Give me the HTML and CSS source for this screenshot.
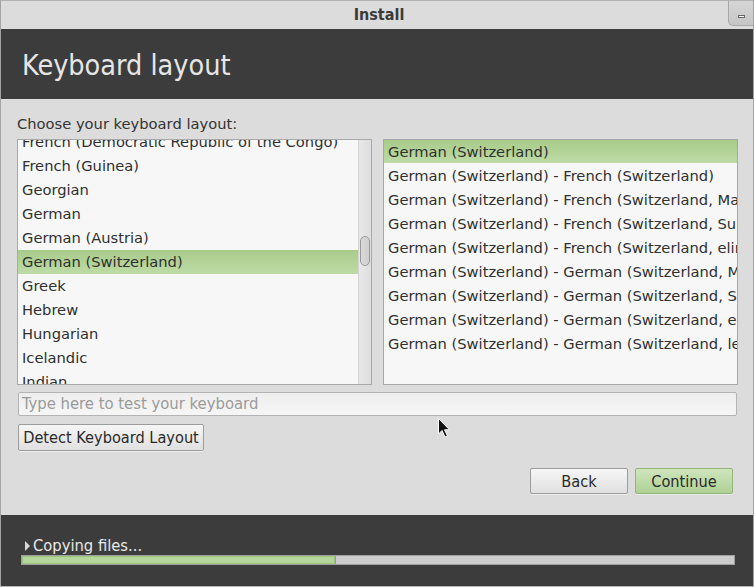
FILE: index.html
```html
<!DOCTYPE html>
<html>
<head>
<meta charset="utf-8">
<link rel="stylesheet" href="styles.css">
</head>
<body>
<div class="window">
  <div class="titlebar">
    <span class="title">Install</span>
    <div class="min-btn"><span class="dash"></span></div>
  </div>
  <div class="header">Keyboard layout</div>
  <div class="content">
    <div class="label">Choose your keyboard layout:</div>
    <div class="lists">
      <div class="listbox">
        <div class="rows scrolled">
          <div class="row">French (Democratic Republic of the Congo)</div>
          <div class="row">French (Guinea)</div>
          <div class="row">Georgian</div>
          <div class="row">German</div>
          <div class="row">German (Austria)</div>
          <div class="row sel">German (Switzerland)</div>
          <div class="row">Greek</div>
          <div class="row">Hebrew</div>
          <div class="row">Hungarian</div>
          <div class="row">Icelandic</div>
          <div class="row">Indian</div>
        </div>
        <div class="scrollbar"><div class="thumb"></div></div>
      </div>
      <div class="listbox">
        <div class="rows variants">
          <div class="row sel first">German (Switzerland)</div>
          <div class="row">German (Switzerland) - French (Switzerland)</div>
          <div class="row">German (Switzerland) - French (Switzerland, Macintosh)</div>
          <div class="row">German (Switzerland) - French (Switzerland, Sun dead keys)</div>
          <div class="row">German (Switzerland) - French (Switzerland, eliminate dead keys)</div>
          <div class="row">German (Switzerland) - German (Switzerland, Macintosh)</div>
          <div class="row">German (Switzerland) - German (Switzerland, Sun dead keys)</div>
          <div class="row">German (Switzerland) - German (Switzerland, eliminate dead keys)</div>
          <div class="row">German (Switzerland) - German (Switzerland, legacy)</div>
        </div>
      </div>
    </div>
    <div class="testfield">Type here to test your keyboard</div>
    <div class="detect-row"><button class="btn detect">Detect Keyboard Layout</button></div>
    <div class="nav">
      <button class="btn">Back</button>
      <button class="btn primary">Continue</button>
    </div>
  </div>
  <div class="footer">
    <div class="status"><span class="tri"></span>Copying files...</div>
    <div class="progress"><div class="fill" style="width:314px"></div></div>
  </div>
  <svg class="cursor" width="14" height="22" viewBox="0 0 14 22">
    <path d="M1.5 1.5 L1.5 17 L5 13.5 L8 20 L10.5 19 L7.5 12.8 L12.5 12.8 Z" fill="#111" stroke="#fff" stroke-width="1"/>
  </svg>
</div>
</body>
</html>
```
FILE: styles.css
```css
* { box-sizing: border-box; }
html, body { margin: 0; padding: 0; }
body {
  width: 754px;
  height: 587px;
  overflow: hidden;
  background: #dcdcdc;
  font-family: "DejaVu Sans", "Liberation Sans", sans-serif;
  color: #2e2e2e;
}
.window {
  position: relative;
  width: 754px;
  height: 587px;
  border-left: 1px solid #a4a4a4;
  border-right: 1px solid #a4a4a4;
  border-bottom: 1px solid #b8b8b8;
  display: flex;
  flex-direction: column;
  background: #dcdcdc;
}
.titlebar {
  position: relative;
  height: 29px;
  display: flex;
  align-items: center;
  justify-content: center;
  background: #dcdcdc;
  border-top: 1px solid #b0b0b0;
  padding-bottom: 2px;
}
.title {
  font-family: "DejaVu Sans Condensed", "DejaVu Sans", sans-serif;
  font-stretch: condensed;
  font-weight: bold;
  font-size: 16px;
  color: #3a3a3a;
  margin-left: 4px;
}
.min-btn {
  position: absolute;
  right: 0;
  top: 0;
  width: 25px;
  height: 25px;
  background: linear-gradient(#d6d6d6, #c6c6c6);
  border-left: 1px solid #a8a8a8;
  border-bottom: 1px solid #a8a8a8;
  border-bottom-left-radius: 5px;
  display: flex;
  align-items: center;
  justify-content: center;
}
.dash {
  display: block;
  width: 7px;
  height: 3px;
  background: #fff;
  border: 1px solid #666;
  margin-top: 6px;
}
.header {
  height: 70px;
  background: #3c3c3c;
  color: #e6e6e6;
  font-family: "DejaVu Sans Condensed", "DejaVu Sans", sans-serif;
  font-stretch: condensed;
  font-size: 28.5px;
  padding-left: 21px;
  padding-top: 2px;
  display: flex;
  align-items: center;
}
.content {
  height: 416px;
  padding: 16px 15px 0 16px;
  display: flex;
  flex-direction: column;
}
.label {
  font-size: 14.7px;
  line-height: 17px;
  color: #333;
  margin-bottom: 7px;
}
.lists {
  display: grid;
  grid-template-columns: 355px 355px;
  column-gap: 11px;
}
.listbox {
  position: relative;
  height: 246px;
  border: 1px solid #a8a8a8;
  background: #f7f7f7;
  overflow: hidden;
  display: flex;
}
.rows {
  flex: 1;
  min-width: 0;
}
.scrolled { margin-top: -10px; }
.row {
  height: 24px;
  line-height: 24px;
  padding-left: 4px;
  font-size: 14.7px;
  color: #303030;
  white-space: nowrap;
  overflow: hidden;
}
.variants .row { line-height: 25px; }
.variants .row.first { height: 23px; line-height: 24px; }
.row.sel {
  background: linear-gradient(#a8cb8a, #bedba6);
}
.scrollbar {
  width: 13px;
  border-left: 1px solid #d4d4d4;
  background: linear-gradient(90deg, #e8e8e8, #dedede);
  position: relative;
}
.thumb {
  position: absolute;
  left: 1px;
  top: 96px;
  width: 10px;
  height: 30px;
  border: 1px solid #999;
  border-radius: 5px;
  background: linear-gradient(90deg, #dadada, #cfcfcf);
}
.testfield {
  margin: 7px 1px 0 1px;
  height: 24px;
  border: 1px solid #b4b4b4;
  border-radius: 2px;
  background: linear-gradient(#eeeeee, #f6f6f6);
  color: #9a9a9a;
  font-family: "DejaVu Sans Condensed", "DejaVu Sans", sans-serif;
  font-stretch: condensed;
  font-size: 16.5px;
  line-height: 22px;
  padding-left: 3px;
}
.detect-row {
  margin-top: 8px;
  margin-left: 1px;
  display: flex;
}
.btn {
  font-family: "DejaVu Sans Condensed", "DejaVu Sans", sans-serif;
  font-stretch: condensed;
  font-size: 16.2px;
  color: #2a2a2a;
  height: 26px;
  padding: 0;
  border: 1px solid #9c9c9c;
  border-radius: 2px;
  background: linear-gradient(#f6f6f6, #e0e0e0);
  box-shadow: 0 1px 0 rgba(255,255,255,0.5);
}
.detect {
  width: 186px;
  height: 27px;
}
.nav {
  margin-top: 17px;
  margin-right: 5px;
  display: flex;
  justify-content: flex-end;
  gap: 7px;
}
.nav .btn { width: 98px; }
.btn.primary {
  background: linear-gradient(#cfe5bd, #b0d196);
  border-color: #93b57c;
}
.footer {
  flex: 1;
  background: #3c3c3c;
  padding: 22px 18px 0 20px;
}
.status {
  display: flex;
  align-items: center;
  font-family: "DejaVu Sans Condensed", "DejaVu Sans", sans-serif;
  font-stretch: condensed;
  font-size: 16.4px;
  color: #e8e8e8;
  height: 17px;
  line-height: 17px;
}
.tri {
  display: inline-block;
  width: 0;
  height: 0;
  border-top: 5px solid transparent;
  border-bottom: 5px solid transparent;
  border-left: 5px solid #d8d8d8;
  margin-left: 4px;
  margin-right: 3px;
}
.progress {
  margin-top: 1px;
  height: 10px;
  width: 714px;
  border: 1px solid #a0a0a0;
  background: #cccccc;
}
.fill {
  height: 100%;
  background: #b5d69b;
  border-right: 1px solid #88b06a;
  box-shadow: inset 0 0 0 1px #9cc47e;
}
.cursor {
  position: absolute;
  left: 436px;
  top: 417px;
}
```
